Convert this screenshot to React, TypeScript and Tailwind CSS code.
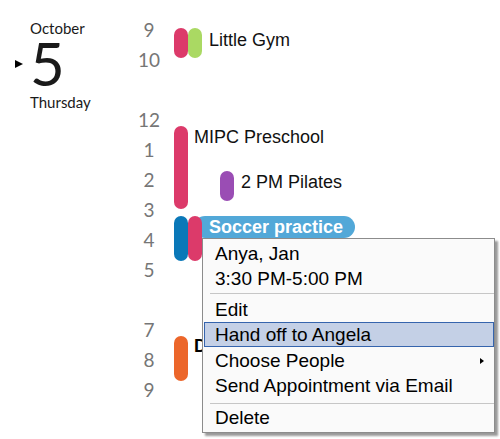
import React from "react";

const hours = ["9", "10", "", "12", "1", "2", "3", "4", "5", "", "7", "8", "9"];

function Pill({ color, h }: { color: string; h: string }) {
  return <div className={`w-[14px] rounded-full ${color} ${h}`} />;
}

export default function App() {
  return (
    <div
      className="relative w-[500px] h-[439px] overflow-hidden bg-white flex"
      style={{ fontFamily: '"Liberation Sans", Arial, sans-serif' }}
    >
      {/* Date column */}
      <div
        className="w-[135px] pl-[30px] pt-[20px] flex flex-col text-[#1a1a1a]"
        style={{ fontFamily: 'Lato, "Liberation Sans", sans-serif' }}
      >
        <div className="text-[15px] leading-[16px]">October</div>
        <div className="flex items-center ml-[-15px] h-[58px]">
          <div className="w-0 h-0 border-y-[4.5px] border-y-transparent border-l-[8px] border-l-black mr-[7px] mt-[-2px]" />
          <div className="text-[60px] leading-[58px] font-normal mt-[-5px]">5</div>
        </div>
        <div className="text-[15px] leading-[16px]">Thursday</div>
      </div>

      {/* Hour column */}
      <div
        className="w-[28px] pt-[15px] flex flex-col text-center text-[#767676] text-[19px]"
        style={{ fontFamily: 'Lato, "Liberation Sans", sans-serif' }}
      >
        {hours.map((h, i) => (
          <div key={i} className="h-[30px] leading-[30px]">
            {h}
          </div>
        ))}
      </div>

      {/* Events */}
      <div className="absolute left-[174px] top-[28px] flex">
        <Pill color="bg-[#dc3a6a]" h="h-[30px]" />
        <Pill color="bg-[#aad963]" h="h-[30px]" />
      </div>
      <div className="absolute left-[209px] top-[30px] text-[18px] leading-[20px] text-[#111]">Little Gym</div>

      <div className="absolute left-[174px] top-[126px] flex">
        <Pill color="bg-[#dc3a6a]" h="h-[83px]" />
      </div>
      <div className="absolute left-[194px] top-[127px] text-[18px] leading-[20px] text-[#111]">MIPC Preschool</div>

      <div className="absolute left-[220px] top-[171px] flex">
        <Pill color="bg-[#9a4db4]" h="h-[30px]" />
      </div>
      <div className="absolute left-[241px] top-[172px] text-[18px] leading-[20px] text-[#111]">2 PM Pilates</div>

      <div className="absolute left-[194px] top-[216px] h-[22px] w-[161px] rounded-full bg-[#52a8d8] pl-[15px] text-white font-bold text-[18px] leading-[22px]">
        Soccer practice
      </div>
      <div className="absolute left-[174px] top-[216px] flex">
        <Pill color="bg-[#0a78b8]" h="h-[45px]" />
        <Pill color="bg-[#dc3a6a]" h="h-[45px]" />
      </div>

      <div className="absolute left-[174px] top-[336px] flex">
        <Pill color="bg-[#ec662a]" h="h-[45px]" />
      </div>
      <div className="absolute left-[194px] top-[336px] text-[18px] leading-[20px] font-bold text-black">D</div>

      {/* Context menu */}
      <div className="absolute left-[202px] top-[238px] w-[293px] border border-[#8c8c8c] bg-[#fafafa] pt-[2px] pb-[2px] shadow-[3px_3px_2px_rgba(0,0,0,0.4)] text-[19px] text-black">
        <div className="h-[25px] leading-[25px] pl-[12px]">Anya, Jan</div>
        <div className="h-[25px] leading-[25px] pl-[12px]">3:30 PM-5:00 PM</div>
        <div className="h-[6px] pt-[2px]">
          <div className="h-px ml-[7px] bg-[#c6c6c6]" />
        </div>
        <div className="h-[25px] leading-[25px] pl-[12px]">Edit</div>
        <div className="h-[25px] ml-[1px] border border-[#3564ad] bg-[#c4d0e6] leading-[23px] pl-[10px]">
          Hand off to Angela
        </div>
        <div className="h-[25px] leading-[25px] pl-[12px] mt-[1px] flex items-center justify-between pr-[10px]">
          <span>Choose People</span>
          <div className="w-0 h-0 border-y-[3.5px] border-y-transparent border-l-[4px] border-l-black" />
        </div>
        <div className="h-[25px] leading-[25px] pl-[12px]">Send Appointment via Email</div>
        <div className="h-[7px] pt-[5px]">
          <div className="h-px ml-[7px] bg-[#c6c6c6]" />
        </div>
        <div className="h-[25px] leading-[25px] pl-[12px]">Delete</div>
      </div>
    </div>
  );
}
